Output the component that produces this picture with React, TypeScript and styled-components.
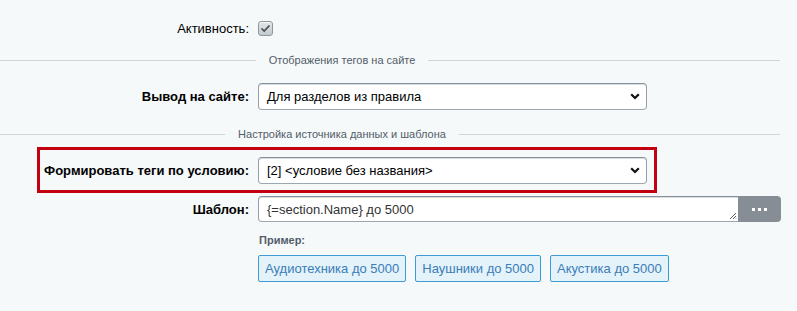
import React from "react";
import styled, { createGlobalStyle } from "styled-components";

const GlobalStyles = createGlobalStyle`
  html, body {
    margin: 0;
    padding: 0;
    background: #f5f9f9;
  }
  body {
    font-family: "Liberation Sans", Arial, sans-serif;
    font-size: 13px;
    color: #000;
  }
`;

const Page = styled.div`
  width: 797px;
  height: 311px;
  padding-top: 21px;
  box-sizing: border-box;
  overflow: hidden;
`;

const Row = styled.div<{ $h: number; $mt?: number }>`
  display: flex;
  align-items: center;
  gap: 9px;
  height: ${(p) => p.$h}px;
  margin-top: ${(p) => p.$mt ?? 0}px;
`;

const Label = styled.div<{ $w?: number; $bold?: boolean }>`
  width: ${(p) => p.$w ?? 249}px;
  flex: none;
  text-align: right;
  font-size: 13px;
  font-weight: ${(p) => (p.$bold ? 700 : 400)};
  white-space: nowrap;
`;

const Checkbox = styled.div`
  width: 15px;
  height: 15px;
  box-sizing: border-box;
  border: 1px solid #8f979c;
  border-radius: 3px;
  background: linear-gradient(#e2e6e7, #c3cacd);
  box-shadow: inset 0 1px 0 rgba(255, 255, 255, 0.7);
  display: flex;
  align-items: center;
  justify-content: center;
`;

const Separator = styled.div<{ $mt: number }>`
  display: flex;
  align-items: center;
  gap: 13px;
  width: 780px;
  height: 14px;
  margin-top: ${(p) => p.$mt}px;
`;

const SepLine = styled.div<{ $extra?: number }>`
  flex: 1 1 ${(p) => p.$extra ?? 0}px;
  height: 1px;
  background: #d0d5d8;
`;

const SepTitle = styled.span`
  font-size: 11px;
  color: #535c69;
  white-space: nowrap;
`;

const Select = styled.div`
  width: 389px;
  height: 27px;
  box-sizing: border-box;
  border: 1px solid;
  border-color: #87919c #959ea9 #9ea7b1 #959ea9;
  border-radius: 4px;
  background: #fff;
  box-shadow: inset 0 1px 0 rgba(180, 188, 191, 0.5);
  display: flex;
  align-items: center;
  justify-content: space-between;
  padding: 0 6px 0 8px;
  font-size: 13px;
  color: #000;
`;

const Highlight = styled.div`
  margin: 6px 0 0 37px;
  width: 620px;
  box-sizing: border-box;
  border: 3px solid #c20010;
  padding: 7px 7px 6px 0;
`;

const Field = styled.div`
  display: flex;
  height: 26px;
`;

const TextArea = styled.div`
  position: relative;
  width: 480px;
  box-sizing: border-box;
  border: 1px solid;
  border-color: #87919c #959ea9 #9ea7b1 #959ea9;
  border-right: none;
  border-radius: 4px 0 0 4px;
  background: #fff;
  box-shadow: inset 0 1px 0 rgba(180, 188, 191, 0.5);
  padding: 0 8px;
  display: flex;
  align-items: center;
  font-size: 13px;
  color: #333;
`;

const Grip = styled.svg`
  position: absolute;
  right: 1px;
  bottom: 1px;
`;

const DotsButton = styled.div`
  width: 43px;
  background: #878d95;
  border-radius: 0 4px 4px 0;
  display: flex;
  align-items: center;
  justify-content: center;
  gap: 3px;
`;

const Dot = styled.span`
  width: 3px;
  height: 3px;
  background: #fff;
`;

const ExampleBlock = styled.div`
  margin: 11px 0 0 258px;
`;

const ExampleTitle = styled.div`
  height: 14px;
  line-height: 14px;
  font-size: 11px;
  font-weight: 700;
  color: #535c69;
  padding-left: 1px;
`;

const Chips = styled.div`
  display: flex;
  gap: 9px;
  margin-top: 8px;
`;

const Chip = styled.div`
  height: 27px;
  box-sizing: border-box;
  border: 1px solid #3f9bd3;
  border-radius: 2px;
  background: #e4f2fa;
  color: #3a7db7;
  font-size: 13px;
  padding: 0 6px;
  display: flex;
  align-items: center;
  white-space: nowrap;
`;

const Chevron = () => (
  <svg width="10" height="7" viewBox="0 0 10 7">
    <path d="M1.2 1.2 L5 5 L8.8 1.2" fill="none" stroke="#111" strokeWidth="2.2" />
  </svg>
);

const App: React.FC = () => {
  const examples = ["Аудиотехника до 5000", "Наушники до 5000", "Акустика до 5000"];

  return (
    <>
      <GlobalStyles />
      <Page>
        <Row $h={15}>
          <Label>Активность:</Label>
          <Checkbox>
            <svg width="11" height="9" viewBox="0 0 11 9">
              <path d="M1.5 4.5 L4.2 7 L9.5 1.5" fill="none" stroke="#474d52" strokeWidth="1.7" />
            </svg>
          </Checkbox>
        </Row>

        <Separator $mt={17}>
          <SepLine />
          <SepTitle>Отображения тегов на сайте</SepTitle>
          <SepLine $extra={96} />
        </Separator>

        <Row $h={27} $mt={16}>
          <Label $bold>Вывод на сайте:</Label>
          <Select>
            <span>Для разделов из правила</span>
            <Chevron />
          </Select>
        </Row>

        <Separator $mt={17}>
          <SepLine />
          <SepTitle>Настройка источника данных и шаблона</SepTitle>
          <SepLine $extra={96} />
        </Separator>

        <Highlight>
          <Row $h={27}>
            <Label $w={209} $bold>
              Формировать теги по условию:
            </Label>
            <Select>
              <span>[2] &lt;условие без названия&gt;</span>
              <Chevron />
            </Select>
          </Row>
        </Highlight>

        <Row $h={26} $mt={3}>
          <Label $bold>Шаблон:</Label>
          <Field>
            <TextArea>
              {"{=section.Name} до 5000"}
              <Grip width="8" height="8" viewBox="0 0 8 8">
                <path d="M7 1 L1 7 M7 4 L4 7 M7 6.5 L6.5 7" stroke="#555" strokeWidth="0.9" />
              </Grip>
            </TextArea>
            <DotsButton>
              <Dot />
              <Dot />
              <Dot />
            </DotsButton>
          </Field>
        </Row>

        <ExampleBlock>
          <ExampleTitle>Пример:</ExampleTitle>
          <Chips>
            {examples.map((e) => (
              <Chip key={e}>{e}</Chip>
            ))}
          </Chips>
        </ExampleBlock>
      </Page>
    </>
  );
};

export default App;
